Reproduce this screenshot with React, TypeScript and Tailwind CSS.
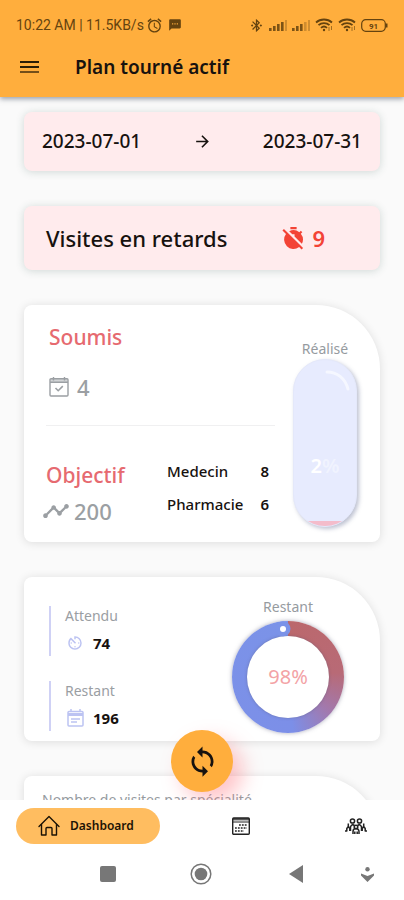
import type { ReactNode } from 'react';
import { MdAlarm, MdArrowForward, MdAvTimer, MdBluetoothConnected, MdSync, MdTextsms, MdTimeline, MdTimerOff } from 'react-icons/md';

const visits = [
  { label: 'Medecin', count: 8 },
  { label: 'Pharmacie', count: 6 },
];

function SignalIcon({ level }: { level: number }) {
  return (
    <svg width="18" height="11" viewBox="0 0 18 11" fill="currentColor">
      {[0, 1, 2, 3, 4].map((i) => (
        <rect key={i} x={i * 4} y={8 - i * 2} width="2.6" height={3 + i * 2} opacity={i < level ? 0.85 : 0.3} />
      ))}
    </svg>
  );
}

function WifiIcon() {
  return (
    <svg width="18" height="14" viewBox="0 0 18 14" fill="none" stroke="currentColor" strokeWidth="1.8">
      <path d="M1 4.5C5.5 0.5 12.5 0.5 17 4.5" />
      <path d="M3.5 7.2C6.5 4.4 11.5 4.4 14.5 7.2" />
      <path d="M6 9.8C7.8 8.2 10.2 8.2 12 9.8" />
      <circle cx="9" cy="12" r="1.2" fill="currentColor" stroke="none" />
      <path d="M14 9v4M16.5 8v4" strokeWidth="1" opacity="0.6" />
    </svg>
  );
}

function BatteryIcon() {
  return (
    <svg width="27" height="13" viewBox="0 0 27 13" fill="none" stroke="currentColor">
      <rect x="0.7" y="0.7" width="23.6" height="11.6" rx="4" strokeWidth="1.2" />
      <path d="M25.5 4.5v4" strokeWidth="2" />
      <text x="12.5" y="9.5" textAnchor="middle" fontSize="8" fontWeight="700" fill="currentColor" stroke="none">91</text>
    </svg>
  );
}

function CalendarCheckIcon() {
  return (
    <svg width="20" height="20" viewBox="0 0 20 20" fill="none" stroke="currentColor" strokeWidth="1.4">
      <rect x="1" y="1.7" width="18" height="17.3" rx="1" />
      <path d="M1 5.2h18M4.5 0v3.5M15.5 0v3.5" />
      <path d="M1.5 3.5h17" strokeWidth="3" opacity="0.45" />
      <path d="M6.5 11l2.7 2.7 4.6-4.6" strokeWidth="1.6" />
    </svg>
  );
}

function NoteIcon() {
  return (
    <svg width="17" height="18" viewBox="0 0 17 18" fill="none" stroke="currentColor" strokeWidth="1.5">
      <rect x="1" y="2.5" width="15" height="14.5" rx="1" />
      <path d="M1 5.5h15" strokeWidth="3" />
      <path d="M4 0v3M13 0v3M4 10h9M4 13h6" />
    </svg>
  );
}

function HomeIcon() {
  return (
    <svg width="22" height="22" viewBox="0 0 22 22" fill="none" stroke="currentColor" strokeWidth="1.4" strokeLinejoin="round" strokeLinecap="round">
      <path d="M1 11.5L11 1.5l10 10" />
      <path d="M3.5 9.5V20H8v-6.5a1 1 0 0 1 1-1h4a1 1 0 0 1 1 1V20h4.5V9.5" />
    </svg>
  );
}

function PlanningIcon() {
  return (
    <svg width="18" height="18" viewBox="0 0 18 18" fill="none" stroke="currentColor">
      <rect x="0.7" y="1" width="16.6" height="16.3" rx="1" strokeWidth="1.4" />
      <path d="M1 2.2h16" strokeWidth="2.4" opacity="0.75" />
      <path d="M1 5h16" />
      <path d="M7 8h8M3 11h12M3 14h9" strokeWidth="1.8" strokeDasharray="1.8 1.1" opacity="0.75" />
    </svg>
  );
}

function TeamIcon() {
  return (
    <svg width="22" height="17" viewBox="0 0 22 17" fill="none" stroke="currentColor" strokeWidth="1.5" strokeLinejoin="round">
      <circle cx="7.5" cy="3" r="2.1" />
      <circle cx="14.5" cy="3" r="2.1" />
      <circle cx="11" cy="9" r="1.8" />
      <path d="M8 16v-2.5a3 3 0 0 1 6 0V16M9.8 16v-2.500M12.200 16v-2.500" />
      <path d="M5.500 13V8.500l2-2 2 1M16.500 13V8.500l-2-2-2 1" />
      <path d="M3.300 5.500v3l-1.500 2V13H0M3.300 8.500l1.500 2V13M18.700 5.500v3l1.500 2V13H22M18.700 8.500l-1.500 2V13" />
    </svg>
  );
}

function Stat({ label, value, icon }: { label: string; value: number; icon: ReactNode }) {
  return (
    <div className="h-[50px] border-l-2 border-[#cfd1f5] pl-[14px]">
      <p className="text-[14px] leading-5 text-[#9a9ea3]">{label}</p>
      <div className="mt-[7px] flex items-center gap-2">
        <span className="flex w-5 justify-center text-[#bcc3f2]">{icon}</span>
        <span className="text-[15px] leading-5 font-bold">{value}</span>
      </div>
    </div>
  );
}

function Header() {
  return (
    <header className="relative z-10 bg-[#ffae3d] px-4 pt-4 pb-[15px] shadow-[0_2px_5px_rgba(60,70,90,0.5)]">
      <div className="flex h-[18px] items-center justify-between font-[Roboto,sans-serif] text-[#65430f]">
        <div className="flex items-center gap-[2px]">
          <span className="text-[14px]">10:22 AM | 11.5KB/s</span>
          <MdAlarm size={17} />
          <MdTextsms size={14} className="ml-[3px]" />
        </div>
        <div className="flex items-center gap-[5px]">
          <MdBluetoothConnected size={15} />
          <SignalIcon level={4} />
          <SignalIcon level={3} />
          <WifiIcon />
          <WifiIcon />
          <BatteryIcon />
        </div>
      </div>
      <div className="mt-[18px] flex h-[30px] items-center gap-9 pl-1">
        <button type="button" aria-label="Menu" className="text-[#2b1d06]">
          <svg width="19" height="14" viewBox="0 0 19 14" stroke="currentColor" strokeWidth="2">
            <path d="M0 2h19M0 7h19" />
            <path d="M0 12h19" opacity="0.65" />
          </svg>
        </button>
        <h1 className="text-[19px] font-semibold">Plan tourné actif</h1>
      </div>
    </header>
  );
}

function SummaryCard() {
  return (
    <section className="flex h-[237px] rounded-lg rounded-tr-[64px] bg-white pr-[23px] pl-[22px] shadow-[0_1px_10px_rgba(0,0,0,0.12)]">
      <div className="flex-1 pt-[18px]">
        <h2 className="pl-[3px] text-[21px] leading-7 font-medium text-[#e66a70]">Soumis</h2>
        <div className="mt-[22px] flex h-7 items-center gap-2 pl-[3px] text-[#9b9fa3]">
          <CalendarCheckIcon />
          <span className="text-[22px] font-medium">4</span>
        </div>
        <hr className="mt-6 border-[#f0f0f1]" />
        <div className="mt-[33px] flex justify-between pr-[6px]">
          <div>
            <h2 className="text-[21px] leading-8 font-medium text-[#e66a70]">Objectif</h2>
            <div className="-ml-1 flex h-10 items-center gap-1 text-[#9b9fa3]">
              <MdTimeline size={28} />
              <span className="text-[22px] font-medium">200</span>
            </div>
          </div>
          <dl className="flex w-[102px] flex-col gap-[9px] text-[15px] leading-6 font-medium">
            {visits.map((v) => (
              <div key={v.label} className="flex justify-between">
                <dt>{v.label}</dt>
                <dd className="font-semibold">{v.count}</dd>
              </div>
            ))}
          </dl>
        </div>
      </div>
      <div className="ml-[18px] w-16 pt-[34px] text-center">
        <p className="text-[14px] leading-5 text-[#969b9f]">Réalisé</p>
        <div className="relative h-[168px] overflow-hidden rounded-full border border-[#e4e8fa] bg-[#e7ebfe] shadow-[2px_2px_4px_rgba(90,100,140,0.4)]">
          <div className="absolute inset-x-0 bottom-0 h-[5px] bg-[#f4bccb]" />
          <svg className="absolute top-[9px] right-[5px]" width="26" height="26" viewBox="0 0 26 26" fill="none" stroke="#ffffff" strokeLinecap="round">
            <path d="M2 3C12 3 20 9 23 20" strokeWidth="3" opacity="0.6" />
          </svg>
          <span className="absolute inset-x-0 top-[92px] text-[20px] leading-7 font-semibold text-white">
            2<span className="opacity-40">%</span>
          </span>
        </div>
      </div>
    </section>
  );
}

function RemainingCard() {
  return (
    <section className="flex h-[164px] justify-between rounded-lg rounded-tr-[64px] bg-white pr-9 pl-[25px] shadow-[0_1px_10px_rgba(0,0,0,0.12)]">
      <div className="flex flex-col gap-[25px] pt-[29px]">
        <Stat label="Attendu" value={74} icon={<MdAvTimer size={18} />} />
        <Stat label="Restant" value={196} icon={<NoteIcon />} />
      </div>
      <div className="flex flex-col items-center pt-5">
        <p className="text-[14px] leading-5 text-[#969b9f]">Restant</p>
        <div className="relative mt-1 flex size-[112px] items-center justify-center rounded-full bg-[conic-gradient(#bb686c_0deg,#b86a76_85deg,#a279ad_130deg,#7c8fe8_175deg,#7b93e8_360deg)] shadow-[0_0_4px_rgba(90,90,120,0.5)]">
          <div className="flex size-[82px] items-center justify-center rounded-full bg-white text-[20px] text-[#f3a3a6] shadow-[0_0_3px_rgba(90,90,120,0.5)]">98%</div>
          <svg className="absolute inset-0" viewBox="0 0 112 112">
            <circle cx="51" cy="7.7" r="7.500" fill="#7b93e8" />
            <circle cx="51" cy="8" r="3" fill="#ffffff" />
          </svg>
        </div>
      </div>
    </section>
  );
}

function BottomNav() {
  return (
    <nav className="relative bg-white px-4 pt-2">
      <div className="flex h-9 items-center">
        <a href="#dashboard" className="flex h-full w-36 items-center gap-[10px] rounded-full bg-[#ffbd60] pl-[22px] text-[#1c1305]">
          <HomeIcon />
          <span className="text-[12px] font-semibold">Dashboard</span>
        </a>
        <a href="#planning" aria-label="Planning" className="ml-[72px] text-[#222222]"><PlanningIcon /></a>
        <a href="#team" aria-label="Equipe" className="mr-[21px] ml-auto text-[#222222]"><TeamIcon /></a>
      </div>
      <div className="flex h-14 items-center justify-between pt-1 pr-[14px] pl-[84px] text-[#777777]">
        <button type="button" aria-label="Applications" className="size-4 rounded-xs bg-[#777777]" />
        <button type="button" aria-label="Accueil" className="ml-4">
          <svg width="22" height="22" viewBox="0 0 22 22" fill="none" stroke="currentColor" strokeWidth="1.500">
            <circle cx="11" cy="11" r="9.800" />
            <circle cx="11" cy="11" r="6.300" fill="currentColor" stroke="none" />
          </svg>
        </button>
        <button type="button" aria-label="Retour" className="ml-5">
          <svg width="14" height="18" viewBox="0 0 14 18" fill="currentColor"><path d="M14 0v18L0 9z" /></svg>
        </button>
        <button type="button" aria-label="Masquer">
          <svg width="13" height="15" viewBox="0 0 13 15" fill="currentColor">
            <circle cx="6.500" cy="2.300" r="2.200" />
            <path d="M0 6.500l6.500 2.500L13 6.500v2L6.500 15 0 8.500z" />
          </svg>
        </button>
      </div>
    </nav>
  );
}

export default function App() {
  return (
    <div className="flex h-screen flex-col overflow-hidden bg-[#fafafa] font-['Noto_Sans',sans-serif] text-[#17120f]">
      <Header />
      <div className="relative min-h-0 flex-1">
        <main className="flex h-full flex-col gap-[35px] overflow-hidden px-6 pt-[15px] *:shrink-0">
          <section className="flex h-[59px] items-center justify-between rounded-lg bg-[#ffebed] px-[18px] text-[19px] font-medium shadow-[0_1px_8px_rgba(40,80,70,0.2)]">
            <button type="button">2023-07-01</button>
            <MdArrowForward size={19} />
            <button type="button">2023-07-31</button>
          </section>
          <section className="flex h-16 items-center justify-between rounded-lg bg-[#ffebed] pr-[55px] pl-[22px] shadow-[0_1px_8px_rgba(40,80,70,0.2)]">
            <h2 className="text-[22px] font-medium">Visites en retards</h2>
            <div className="flex items-center gap-[6px] text-[#f34336]">
              <MdTimerOff size={25} />
              <span className="text-[22px] font-semibold">9</span>
            </div>
          </section>
          <SummaryCard />
          <RemainingCard />
          <section className="h-[200px] rounded-lg rounded-tr-[64px] bg-white px-[18px] pt-[14px] shadow-[0_1px_10px_rgba(0,0,0,0.12)]">
            <h2 className="text-[14px] leading-5 text-[#969b9f]">Nombre de visites par spécialité</h2>
          </section>
        </main>
        <button
          type="button"
          aria-label="Synchroniser"
          className="absolute bottom-2 left-1/2 flex size-[62px] -translate-x-1/2 items-center justify-center rounded-full bg-[#ffae3d] shadow-[10px_10px_20px_rgba(255,110,120,0.4)]"
        >
          <MdSync size={33} />
        </button>
      </div>
      <BottomNav />
    </div>
  );
}
